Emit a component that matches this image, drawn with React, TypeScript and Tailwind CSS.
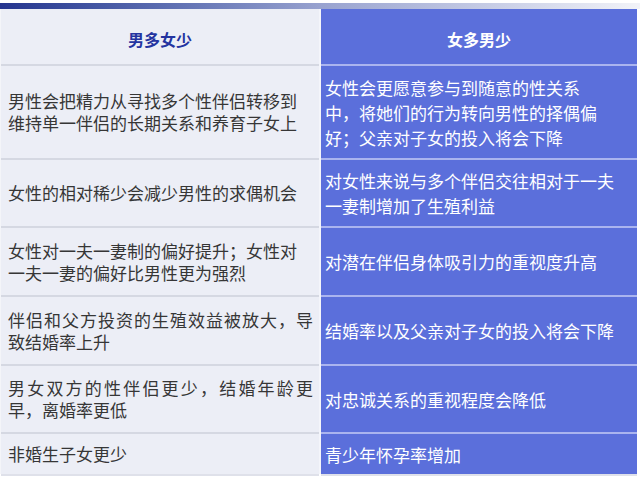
import React from "react";

type Line = { t: string; j?: boolean };
type Row = { h: number; left: Line[]; right: string[] };

const rows: Row[] = [
  {
    h: 94,
    left: [
      { t: "男性会把精力从寻找多个性伴侣转移到" },
      { t: "维持单一伴侣的长期关系和养育子女上" },
    ],
    right: [
      "女性会更愿意参与到随意的性关系",
      "中，将她们的行为转向男性的择偶偏",
      "好；父亲对子女的投入将会下降",
    ],
  },
  {
    h: 68,
    left: [{ t: "女性的相对稀少会减少男性的求偶机会" }],
    right: ["对女性来说与多个伴侣交往相对于一夫", "一妻制增加了生殖利益"],
  },
  {
    h: 69,
    left: [
      { t: "女性对一夫一妻制的偏好提升；女性对" },
      { t: "一夫一妻的偏好比男性更为强烈" },
    ],
    right: ["对潜在伴侣身体吸引力的重视度升高"],
  },
  {
    h: 69,
    left: [
      { t: "伴侣和父方投资的生殖效益被放大，导", j: true },
      { t: "致结婚率上升" },
    ],
    right: ["结婚率以及父亲对子女的投入将会下降"],
  },
  {
    h: 68,
    left: [
      { t: "男女双方的性伴侣更少，结婚年龄更", j: true },
      { t: "早，离婚率更低" },
    ],
    right: ["对忠诚关系的重视程度会降低"],
  },
  {
    h: 40,
    left: [{ t: "非婚生子女更少" }],
    right: ["青少年怀孕率增加"],
  },
];

export default function App() {
  return (
    <div
      className="w-[640px] h-[479px] bg-white overflow-hidden"
      style={{ fontFamily: '"Noto Sans CJK SC", "Noto Sans", sans-serif' }}
    >
      <div className="h-[3px]" />
      <div className="h-[6px] w-[640px] bg-gradient-to-r from-[#25348e] via-[#98a2cf] to-[#f2f3f8]" />
      <div className="flex flex-col">
        {/* header */}
        <div className="flex h-[57px]">
          <div className="w-[1px] bg-[#f4f5f9]" />
          <div className="w-[318px] bg-[#eceef6] border-b-2 border-[#d5d8e2] flex items-center justify-center pt-[4px]">
            <span className="text-[16px] font-bold text-[#2434a0] leading-none">男多女少</span>
          </div>
          <div className="w-[2px] bg-[#f4f5fa]" />
          <div className="w-[316px] bg-[#5b6fdb] border-b-2 border-[#aab4ef] flex items-center justify-center pt-[4px]">
            <span className="text-[16px] font-bold text-white leading-none">女多男少</span>
          </div>
        </div>
        {rows.map((r, i) => (
          <div key={i} className="flex" style={{ height: r.h }}>
            <div className="w-[1px] bg-[#f4f5f9]" />
            <div
              className={
                "w-[318px] bg-[#eceef6] flex flex-col justify-center pl-[7px] text-[17px] leading-[22px] text-[#363636] " +
                (i < rows.length - 1 ? "border-b-2 border-[#d5d8e2]" : "")
              }
            >
              {r.left.map((l, k) =>
                l.j ? (
                  <div key={k} className="w-[305px] whitespace-nowrap text-justify [text-align-last:justify]">
                    {l.t}
                  </div>
                ) : (
                  <div key={k} className="whitespace-nowrap">
                    {l.t}
                  </div>
                )
              )}
            </div>
            <div className="w-[2px] bg-[#f4f5fa]" />
            <div
              className={
                "w-[316px] bg-[#5b6fdb] flex flex-col justify-center pl-[4px] text-[17px] leading-[25px] text-white " +
                (i < rows.length - 1 ? "border-b-2 border-[#aab4ef]" : "")
              }
            >
              {r.right.map((t, k) => (
                <div key={k} className="whitespace-nowrap">
                  {t}
                </div>
              ))}
            </div>
          </div>
        ))}
        <div className="flex h-[2px]">
          <div className="w-[1px]" />
          <div className="w-[318px] bg-[#dfe1ea]" />
          <div className="w-[2px]" />
          <div className="w-[316px] bg-[#dfe1ea]" />
        </div>
      </div>
    </div>
  );
}
